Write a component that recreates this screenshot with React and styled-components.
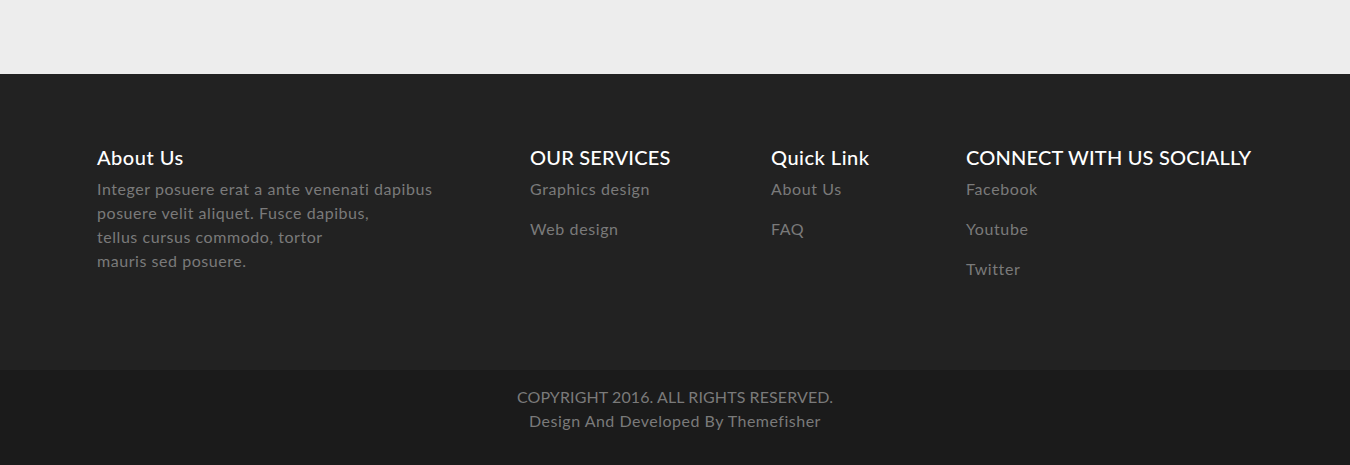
import React from "react";
import styled, { createGlobalStyle } from "styled-components";

const Global = createGlobalStyle`
  html, body { margin: 0; padding: 0; background: #ededed; }
  body { font-family: Lato, "Open Sans", sans-serif; }
`;

const Top = styled.div`
  height: 74px;
  background: #ededed;
`;

const Main = styled.footer`
  background: #222222;
  height: 296px;
  box-sizing: border-box;
  padding: 72px 0 0 97px;
  display: grid;
  grid-template-columns: 433px 241px 195px auto;
  align-items: start;
`;

const Col = styled.div`
  display: flex;
  flex-direction: column;
`;

const Heading = styled.h4`
  margin: 0 0 9px;
  font-size: 20px;
  line-height: 22px;
  font-weight: 500;
  letter-spacing: ${(p) => (p.$caps ? "0.2px" : "0.5px")};
  color: #ffffff;
  white-space: nowrap;
`;

const Text = styled.p`
  margin: 0;
  font-size: 16px;
  line-height: 24px;
  letter-spacing: 0.55px;
  color: #7a7a7a;
`;

const LinkList = styled.ul`
  list-style: none;
  margin: 0;
  padding: 0;
  display: flex;
  flex-direction: column;
  gap: 16px;
`;

const LinkItem = styled.li`
  font-size: 16px;
  line-height: 24px;
  letter-spacing: 0.6px;
  color: #7a7a7a;
`;

const Bottom = styled.div`
  background: #1b1b1b;
  height: 95px;
  box-sizing: border-box;
  padding-top: 15px;
  text-align: center;
`;

const BottomLine = styled.p`
  margin: 0;
  font-size: 16px;
  line-height: 24px;
  letter-spacing: ${(p) => (p.$caps ? "0.1px" : "0.5px")};
  color: #7a7a7a;
`;

const columns = [
  { title: "OUR SERVICES", caps: true, links: ["Graphics design", "Web design"] },
  { title: "Quick Link", caps: false, links: ["About Us", "FAQ"] },
  { title: "CONNECT WITH US SOCIALLY", caps: true, links: ["Facebook", "Youtube", "Twitter"] },
];

export default function App() {
  return (
    <>
      <Global />
      <Top />
      <Main>
        <Col>
          <Heading>About Us</Heading>
          <Text>
            Integer posuere erat a ante venenati dapibus
            <br />
            posuere velit aliquet. Fusce dapibus,
            <br />
            tellus cursus commodo, tortor
            <br />
            mauris sed posuere.
          </Text>
        </Col>
        {columns.map((c) => (
          <Col key={c.title}>
            <Heading $caps={c.caps}>{c.title}</Heading>
            <LinkList>
              {c.links.map((l) => (
                <LinkItem key={l}>{l}</LinkItem>
              ))}
            </LinkList>
          </Col>
        ))}
      </Main>
      <Bottom>
        <BottomLine $caps>COPYRIGHT 2016. ALL RIGHTS RESERVED.</BottomLine>
        <BottomLine>Design And Developed By Themefisher</BottomLine>
      </Bottom>
    </>
  );
}
